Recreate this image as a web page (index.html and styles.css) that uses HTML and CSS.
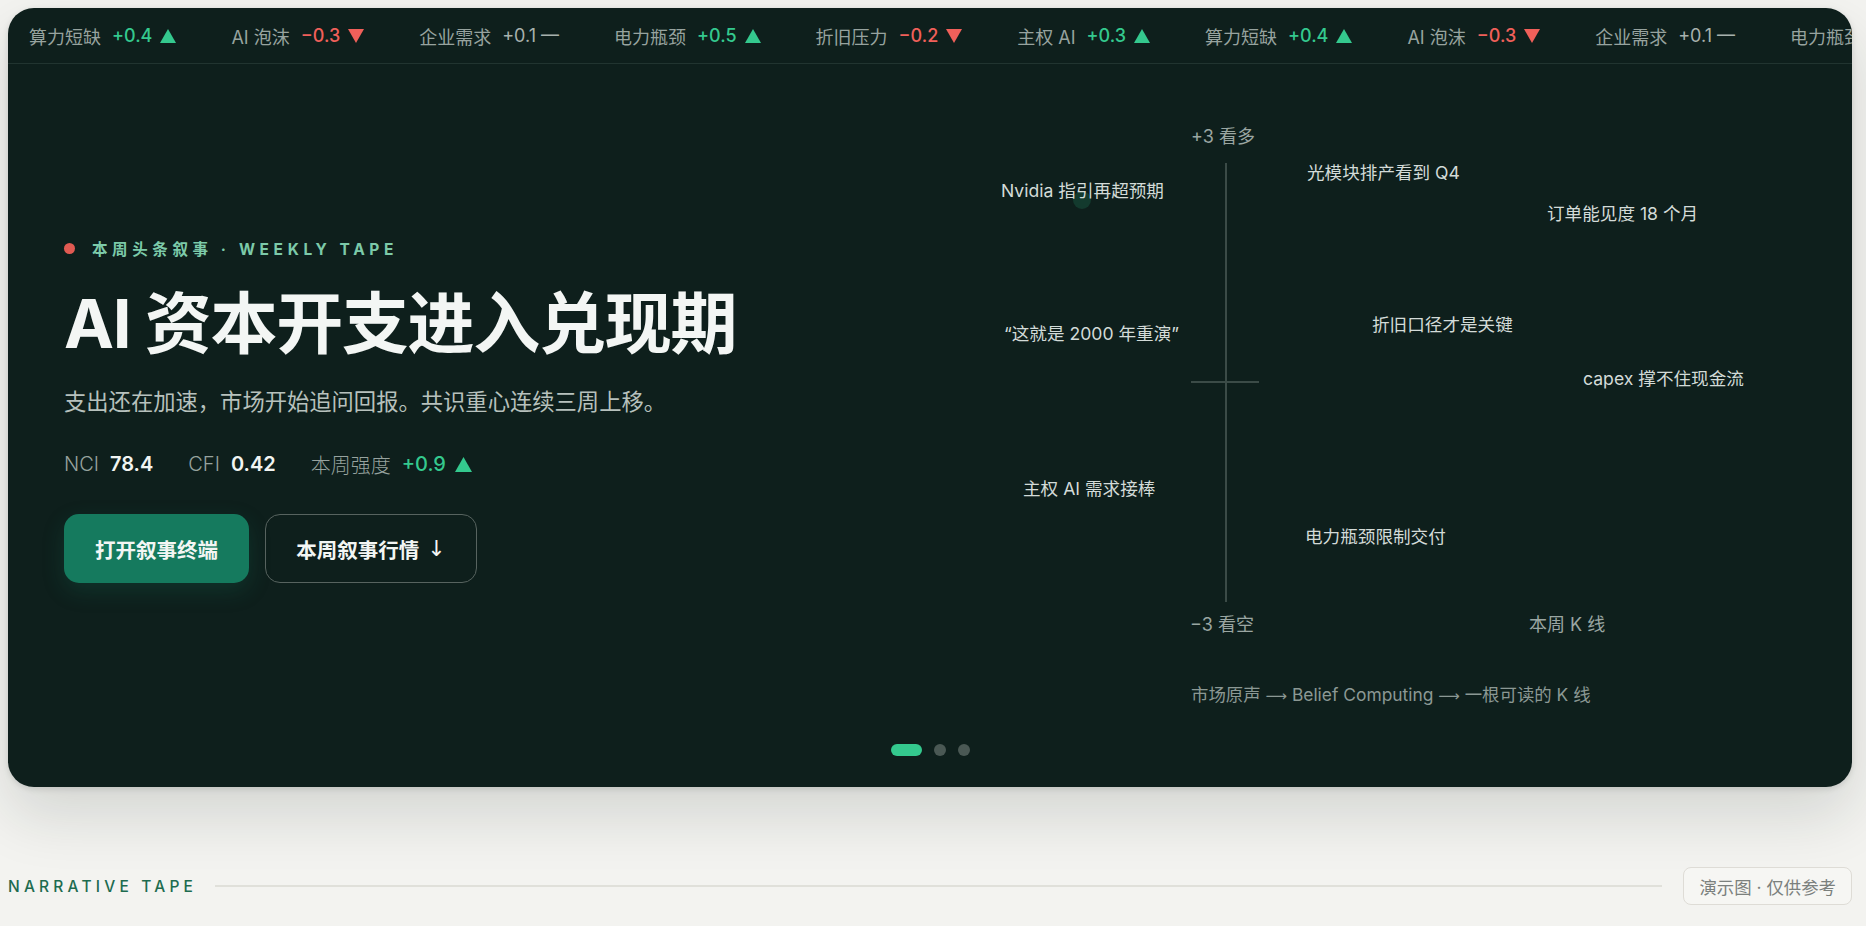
FILE: index.html
```html
<!DOCTYPE html>
<html lang="zh-CN">
<head>
<meta charset="utf-8">
<title>Narrative Tape</title>
<link rel="stylesheet" href="styles.css">
</head>
<body>
<div class="page">
  <section class="hero-card">
    <div class="ticker">
      <span class="tk"><span class="tk-name">算力短缺</span><span class="up">+0.4</span><svg class="tri" viewBox="0 0 16 14"><path d="M8 0 L16 14 L0 14 Z" fill="#34c98e"/></svg></span>
      <span class="tk"><span class="tk-name">AI 泡沫</span><span class="down">−0.3</span><svg class="tri" viewBox="0 0 16 14"><path d="M0 0 L16 0 L8 14 Z" fill="#f0605a"/></svg></span>
      <span class="tk"><span class="tk-name">企业需求</span><span class="flat">+0.1 —</span></span>
      <span class="tk"><span class="tk-name">电力瓶颈</span><span class="up">+0.5</span><svg class="tri" viewBox="0 0 16 14"><path d="M8 0 L16 14 L0 14 Z" fill="#34c98e"/></svg></span>
      <span class="tk"><span class="tk-name">折旧压力</span><span class="down">−0.2</span><svg class="tri" viewBox="0 0 16 14"><path d="M0 0 L16 0 L8 14 Z" fill="#f0605a"/></svg></span>
      <span class="tk"><span class="tk-name">主权 AI</span><span class="up">+0.3</span><svg class="tri" viewBox="0 0 16 14"><path d="M8 0 L16 14 L0 14 Z" fill="#34c98e"/></svg></span>
      <span class="tk"><span class="tk-name">算力短缺</span><span class="up">+0.4</span><svg class="tri" viewBox="0 0 16 14"><path d="M8 0 L16 14 L0 14 Z" fill="#34c98e"/></svg></span>
      <span class="tk"><span class="tk-name">AI 泡沫</span><span class="down">−0.3</span><svg class="tri" viewBox="0 0 16 14"><path d="M0 0 L16 0 L8 14 Z" fill="#f0605a"/></svg></span>
      <span class="tk"><span class="tk-name">企业需求</span><span class="flat">+0.1 —</span></span>
      <span class="tk"><span class="tk-name">电力瓶颈</span><span class="up">+0.5</span><svg class="tri" viewBox="0 0 16 14"><path d="M8 0 L16 14 L0 14 Z" fill="#34c98e"/></svg></span>
    </div>

    <div class="hero-body">
      <div class="hero-main">
        <div class="hero-left">
          <div class="eyebrow"><span class="live-dot"></span>本周头条叙事 · WEEKLY TAPE</div>
          <h1 class="title">AI 资本开支进入兑现期</h1>
          <p class="subtitle">支出还在加速，市场开始追问回报。共识重心连续三周上移。</p>
          <div class="stats">
            <span class="stat"><span class="stat-k">NCI</span><span class="stat-v">78.4</span></span>
            <span class="stat"><span class="stat-k">CFI</span><span class="stat-v">0.42</span></span>
            <span class="stat"><span class="stat-k">本周强度</span><span class="stat-up">+0.9</span><svg class="tri" viewBox="0 0 16 14"><path d="M8 0 L16 14 L0 14 Z" fill="#34c98e"/></svg></span>
          </div>
          <div class="actions">
            <a class="btn btn-primary" href="#">打开叙事终端</a>
            <a class="btn btn-ghost" href="#">本周叙事行情 <span class="arrow">↓</span></a>
          </div>
        </div>

        <div class="chart">
          <span class="axis-label axis-top">+3 看多</span>
          <span class="axis-line"></span>
          <span class="axis-tick"></span>
          <span class="axis-label axis-bottom">−3 看空</span>
          <span class="axis-label axis-k">本周 K 线</span>
          <span class="glow"></span>
          <span class="lbl l-nvidia">Nvidia 指引再超预期</span>
          <span class="lbl l-optic">光模块排产看到 Q4</span>
          <span class="lbl l-order">订单能见度 18 个月</span>
          <span class="lbl l-2000">“这就是 2000 年重演”</span>
          <span class="lbl l-dep">折旧口径才是关键</span>
          <span class="lbl l-capex">capex 撑不住现金流</span>
          <span class="lbl l-sov">主权 AI 需求接棒</span>
          <span class="lbl l-power">电力瓶颈限制交付</span>
          <span class="caption">市场原声 <span class="arr">⟶</span> Belief Computing <span class="arr">⟶</span> 一根可读的 K 线</span>
        </div>
      </div>

      <div class="pager">
        <span class="pg pg-active"></span>
        <span class="pg"></span>
        <span class="pg"></span>
      </div>
    </div>
  </section>

  <div class="section-head">
    <span class="section-title">NARRATIVE TAPE</span>
    <span class="section-rule"></span>
    <span class="badge">演示图 · 仅供参考</span>
  </div>
</div>
</body>
</html>
```

FILE: styles.css
```css
* { box-sizing: border-box; }

html, body {
  margin: 0;
  padding: 0;
  background: #f3f3f0;
}

body {
  font-family: "Inter", "Noto Sans CJK SC", "Noto Sans", sans-serif;
  color: #1a2421;
}

.page {
  padding: 8px 14px 0 8px;
}

.hero-card {
  width: 1844px;
  height: 779px;
  background: #0e1f1c;
  border-radius: 26px;
  overflow: hidden;
  box-shadow: 0 28px 60px rgba(20, 35, 30, 0.14), 0 2px 6px rgba(0, 0, 0, 0.12);
  display: flex;
  flex-direction: column;
}

/* ticker */
.ticker {
  height: 56px;
  flex: none;
  border-bottom: 1px solid #213430;
  display: flex;
  align-items: center;
  gap: 55px;
  padding-left: 21px;
  white-space: nowrap;
  overflow: hidden;
  font-size: 18px;
}

.tk {
  display: flex;
  align-items: center;
  flex: none;
}

.tk-name {
  color: #97a39f;
  margin-right: 11px;
}

.up { color: #34c98e; font-weight: 500; }
.down { color: #f0605a; font-weight: 500; }
.flat { color: #a7b1ad; }

.tri {
  width: 16px;
  height: 14px;
  margin-left: 8px;
  display: block;
}

/* body */
.hero-body {
  flex: 1;
  display: flex;
  flex-direction: column;
}

.hero-main {
  height: 680px;
  display: flex;
}

.hero-left {
  width: 982px;
  padding: 174px 0 0 56px;
}

.eyebrow {
  display: flex;
  align-items: center;
  height: 20px;
  font-size: 15.5px;
  font-weight: 700;
  letter-spacing: 4.6px;
  color: #7ccaa9;
}

.live-dot {
  width: 11px;
  height: 11px;
  border-radius: 50%;
  background: #e05a52;
  margin-right: 17px;
  flex: none;
}

.title {
  margin: 25px 0 0;
  font-size: 67px;
  line-height: 82px;
  font-weight: 700;
  letter-spacing: -1.3px;
  color: #f3f6f4;
  white-space: nowrap;
}

.subtitle {
  margin: 21px 0 0;
  font-size: 22.3px;
  line-height: 32px;
  color: #b7c1bd;
}

.stats {
  margin-top: 33px;
  height: 26px;
  display: flex;
  align-items: center;
  gap: 35px;
  font-size: 20px;
}

.stat {
  display: flex;
  align-items: center;
}

.stat-k {
  color: #97a39f;
  font-weight: 300;
  margin-right: 11px;
}

.stat-v {
  color: #f1f4f2;
  font-weight: 600;
}

.stat-up {
  color: #34c98e;
  font-weight: 500;
}

.stats .tri {
  width: 17px;
  height: 15px;
  margin-left: 9px;
}

.actions {
  margin-top: 37px;
  display: flex;
  gap: 16px;
}

.btn {
  height: 69px;
  display: inline-flex;
  align-items: center;
  justify-content: center;
  border-radius: 15px;
  font-size: 20.5px;
  font-weight: 700;
  text-decoration: none;
  color: #f3f6f4;
}

.btn .arrow {
  font-family: "DejaVu Sans", sans-serif;
  font-weight: 400;
  margin-left: 8px;
  font-size: 22px;
}

.btn-primary {
  width: 185px;
  background: #157a5e;
  box-shadow: 0 8px 22px rgba(21, 122, 94, 0.22);
}

.btn-ghost {
  width: 212px;
  border: 1.5px solid #57635f;
  background: transparent;
}

/* chart canvas */
.chart {
  position: relative;
  width: 862px;
  height: 680px;
}

.axis-label {
  position: absolute;
  font-size: 18px;
  line-height: 20px;
  color: #9aa6a2;
  white-space: nowrap;
}

.axis-top { left: 201px; top: 63px; }
.axis-bottom { left: 200px; top: 551px; }
.axis-k { left: 539px; top: 551px; }

.axis-line {
  position: absolute;
  left: 235px;
  top: 99px;
  width: 2px;
  height: 439px;
  background: #3b4b47;
}

.axis-tick {
  position: absolute;
  left: 201px;
  top: 317px;
  width: 68px;
  height: 2px;
  background: #3b4b47;
}

.glow {
  position: absolute;
  left: 83px;
  top: 127px;
  width: 18px;
  height: 18px;
  border-radius: 50%;
  background: rgba(52, 201, 142, 0.16);
}

.lbl {
  position: absolute;
  font-size: 17.6px;
  line-height: 20px;
  color: #d3dbd8;
  white-space: nowrap;
}

.l-nvidia { left: 11px; top: 117px; }
.l-optic { left: 317px; top: 99px; }
.l-order { left: 557px; top: 140px; }
.l-2000 { left: 14px; top: 260px; }
.l-dep { left: 382px; top: 251px; }
.l-capex { left: 593px; top: 305px; }
.l-sov { left: 33px; top: 415px; }
.l-power { left: 315px; top: 463px; }

.caption {
  position: absolute;
  left: 201px;
  top: 621px;
  font-size: 17.4px;
  line-height: 20px;
  color: #8b9894;
  white-space: nowrap;
}

.caption .arr {
  font-family: "DejaVu Sans", sans-serif;
  font-size: 15px;
}

/* pager */
.pager {
  height: 12px;
  display: flex;
  justify-content: center;
  gap: 12px;
}

.pg {
  width: 12px;
  height: 12px;
  border-radius: 6px;
  background: #4a5854;
}

.pg-active {
  width: 31px;
  background: #34c98e;
}

/* section head */
.section-head {
  margin-top: 80px;
  width: 1844px;
  display: flex;
  align-items: center;
}

.section-title {
  font-size: 15.5px;
  letter-spacing: 4.2px;
  color: #1d6b4f;
  font-weight: 500;
  white-space: nowrap;
}

.section-rule {
  flex: 1;
  height: 2px;
  background: #e0e0da;
  margin: 0 21px 0 18px;
}

.badge {
  height: 38px;
  padding: 0 15px;
  display: inline-flex;
  align-items: center;
  border: 1px solid #dedcd6;
  border-radius: 8px;
  background: #f6f6f3;
  font-size: 17.4px;
  color: #7b807d;
  white-space: nowrap;
}
```
